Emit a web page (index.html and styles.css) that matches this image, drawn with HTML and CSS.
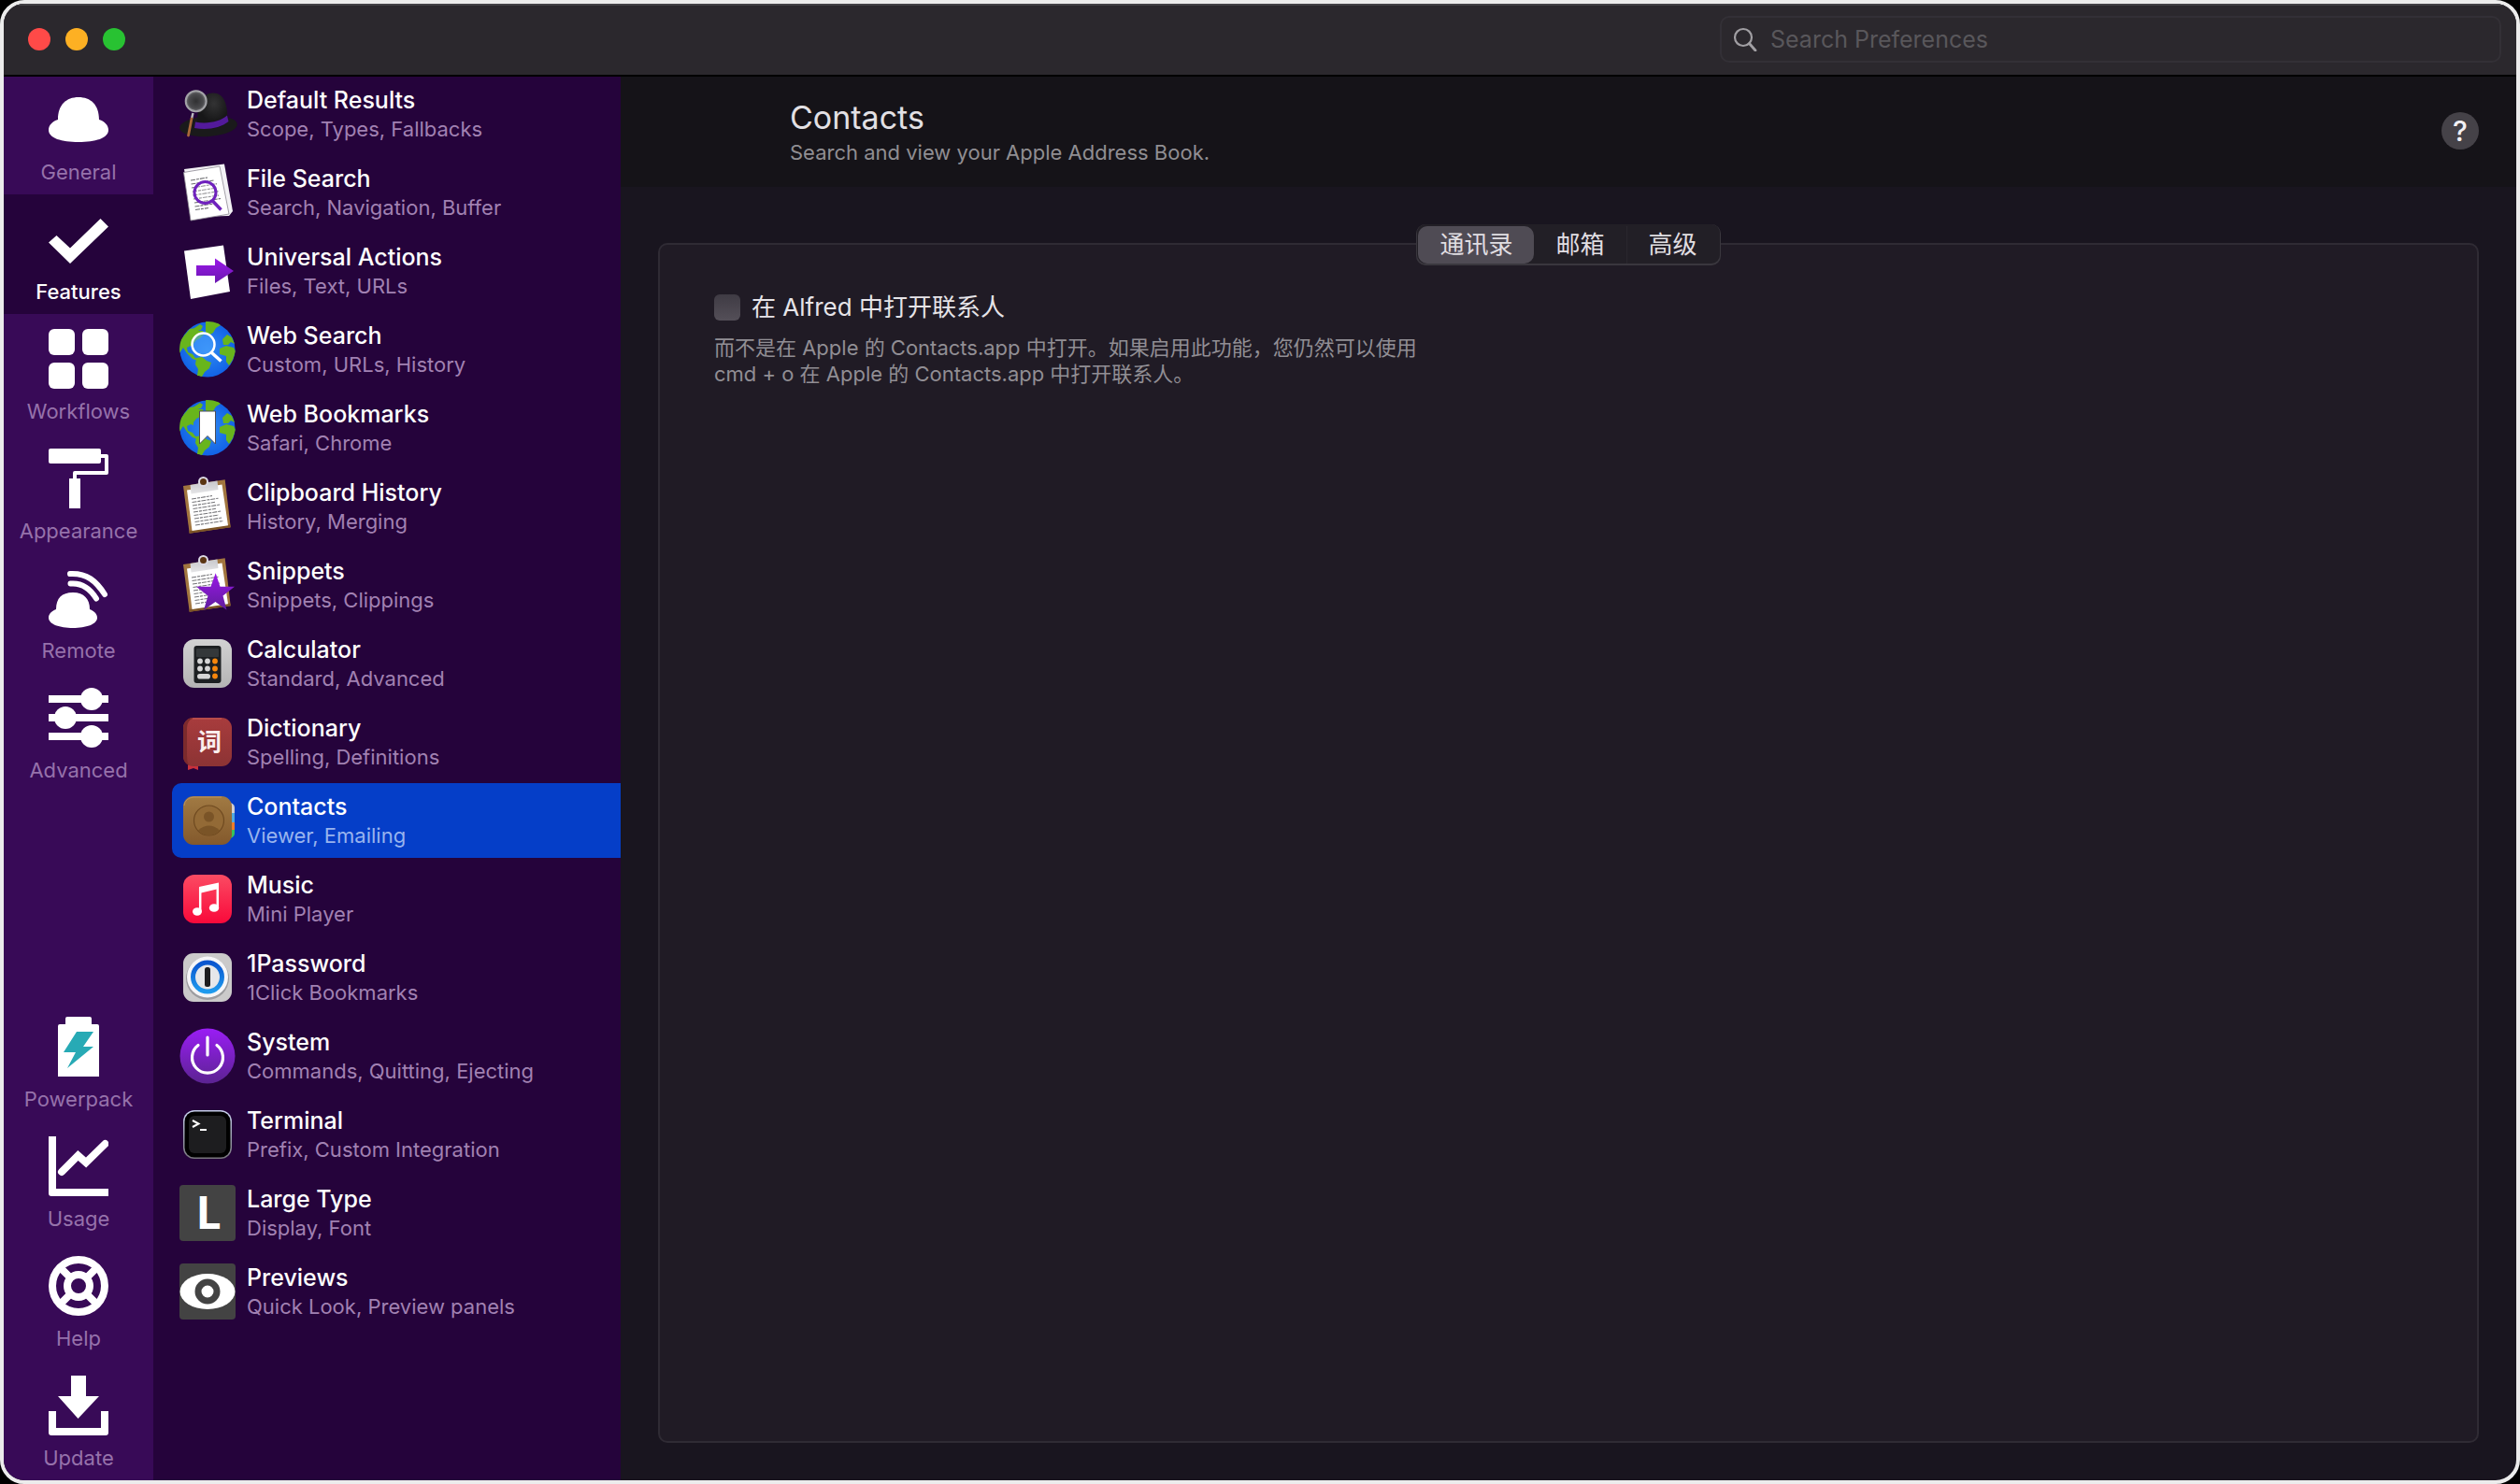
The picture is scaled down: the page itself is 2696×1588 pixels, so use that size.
FILE: index.html
```html
<!DOCTYPE html>
<html lang="en">
<head>
<meta charset="utf-8">
<title>Alfred Preferences</title>
<link rel="stylesheet" href="styles.css">
</head>
<body>
<svg class="defs" aria-hidden="true">
  <defs>
    <linearGradient id="purple" x1="0" y1="0" x2="0" y2="1"><stop offset="0" stop-color="#9a1df5"/><stop offset="1" stop-color="#5b2391"/></linearGradient>
    <linearGradient id="star" x1="0" y1="0" x2="0" y2="1"><stop offset="0" stop-color="#9a17e8"/><stop offset="1" stop-color="#5f1d9c"/></linearGradient>
    <linearGradient id="arrow" x1="0" y1="0" x2="0" y2="1"><stop offset="0" stop-color="#9a17e8"/><stop offset="1" stop-color="#6a18b0"/></linearGradient>
    <linearGradient id="grey" x1="0" y1="0" x2="0" y2="1"><stop offset="0" stop-color="#d2d2d2"/><stop offset="1" stop-color="#b4b4b4"/></linearGradient>
    <linearGradient id="clip" x1="0" y1="0" x2="0" y2="1"><stop offset="0" stop-color="#c4c4c8"/><stop offset="1" stop-color="#e6e6e8"/></linearGradient>
    <linearGradient id="pink" x1="0" y1="0" x2="0" y2="1"><stop offset="0" stop-color="#fb4b63"/><stop offset="1" stop-color="#f9093a"/></linearGradient>
    <linearGradient id="brown" x1="0" y1="0" x2="0" y2="1"><stop offset="0" stop-color="#a17a43"/><stop offset="1" stop-color="#83592c"/></linearGradient>
    <linearGradient id="red" x1="0" y1="0" x2="0" y2="1"><stop offset="0" stop-color="#a83c3d"/><stop offset="1" stop-color="#8c3334"/></linearGradient>
    <linearGradient id="steel" x1="0" y1="0" x2="0" y2="1"><stop offset="0" stop-color="#c6cfec"/><stop offset="1" stop-color="#77767c"/></linearGradient>
    <linearGradient id="ring" x1="0" y1="0" x2="0" y2="1"><stop offset="0" stop-color="#0a55cf"/><stop offset="1" stop-color="#1f9bee"/></linearGradient>
    <radialGradient id="sea"><stop offset="0" stop-color="#2f8bf2"/><stop offset="1" stop-color="#1263e6"/></radialGradient>
    <radialGradient id="lens"><stop offset="0" stop-color="#303032"/><stop offset=".7" stop-color="#4a4a4d"/><stop offset="1" stop-color="#77777b"/></radialGradient>
    <radialGradient id="felt" cx=".55" cy=".3"><stop offset="0" stop-color="#333334"/><stop offset="1" stop-color="#171718"/></radialGradient>
    <clipPath id="disc"><circle cx="30" cy="30" r="30"/></clipPath>
    <g id="globe">
      <circle cx="30" cy="30" r="29.500" fill="url(#sea)"/>
      <g clip-path="url(#disc)" fill="#68b51c">
        <path d="M5 15l6-7 6-1 4 3 4 0 1 4-4 4-4 2-3 4 0 3-3-1-4 2 1 5 5 2 3 4 4 1-1 2-6-2-6-6-4-6-4 6v-12z"/>
        <path d="M18 39l6-1 5 4 5 2-2 6-5 4-3 5-5-1 1-7-3-5z"/>
        <path d="M28 0h12l4 4-5 3-3 5-5 3-3-4z"/>
        <path d="M16 7l6-4 3 2-2 4-5 1z"/>
        <path d="M46 19l5-5 5 3 3 7-4-2-3 3-5 0z"/>
        <path d="M43 29l7-3 8 2 2 4-3 9-4 6-3-4 0-6-7-2z"/>
      </g>
    </g>
    <g id="board">
      <path d="M4 8L48.700 1.300 54.700 52.300 10.700 58.700z" fill="#a2763f"/>
      <path d="M54.700 52.300L10.700 58.700 10.200 56 54.300 49.500z" fill="#7d5526"/>
      <path d="M8 12.500L45.500 6.500 52 50.300 13.500 56z" fill="#fff"/>
      <path d="M13 22l22-3.500M13.500 25.500l28-4.300M14 29l24-3.700M14.500 32.500l29-4.500M15 36l24-3.700M15.500 39.500l29-4.500M16 43l26-4M16.500 46.500l29-4.500M17 50l30-4.600" stroke="#77777b" stroke-width="1.100" stroke-dasharray="5 1 3 1"/>
      <path d="M11.500 7L20 5.500C22 1 29 0 31 4l9.500-1.500L41.500 12 12.500 16.500z" fill="url(#clip)"/>
      <circle cx="25.500" cy="3.500" r="4.500" fill="#5a3412" stroke="#dcd9e4" stroke-width="2"/>
    </g>
  </defs>
</svg>

<div class="window">
  <header class="titlebar">
    <div class="lights">
      <button class="light light-close" aria-label="Close"></button>
      <button class="light light-min" aria-label="Minimise"></button>
      <button class="light light-zoom" aria-label="Zoom"></button>
    </div>
    <label class="search">
      <svg class="search-icon" viewBox="0 0 26 26" aria-hidden="true"><circle cx="11" cy="11" r="9" fill="none" stroke="#a19fa3" stroke-width="2.200"/><path d="M17.500 17.500L24 25" stroke="#a19fa3" stroke-width="2.800" stroke-linecap="round"/></svg>
      <input class="search-input" type="text" placeholder="Search Preferences" aria-label="Search Preferences">
    </label>
  </header>

  <div class="body">
    <nav class="nav">
      <a class="nav-item" href="#general">
        <svg class="nav-icon" viewBox="0 0 64 64"><path d="M10 32C10 16 19 8 32 8s22 8 22 24c6 2 10 6 10 11 0 9-14 13-32 13S0 52 0 43c0-5 4-9 10-11z"/></svg>
        General</a>
      <a class="nav-item nav-item-active" href="#features">
        <svg class="nav-icon" viewBox="0 0 64 64"><path d="M55.500 10L64 18.500 23 58 0 35.500 8.500 28 23 41.500z"/></svg>
        Features</a>
      <a class="nav-item" href="#workflows">
        <svg class="nav-icon" viewBox="0 0 64 64"><rect width="28" height="28" rx="6"/><rect x="36" width="28" height="28" rx="6"/><rect y="36" width="28" height="28" rx="6"/><rect x="36" y="36" width="28" height="28" rx="6"/></svg>
        Workflows</a>
      <a class="nav-item" href="#appearance">
        <svg class="nav-icon" viewBox="0 0 64 64"><rect width="56" height="16" rx="2"/><path d="M56 6h6q2 0 2 2v18q0 2-2 2H30v4h4v32H22V32h4v-6q0-2 2-2h32V10h-4z"/></svg>
        Appearance</a>
      <a class="nav-item" href="#remote">
        <svg class="nav-icon" viewBox="0 0 64 64"><path d="M8 44C8 32 14 26 26 26s18 7 18 18c5 2 8 5 8 9 0 7-12 11-26 11S0 60 0 53c0-4 3-7 8-9z"/><path d="M23 6C41 5 51 14 60 28M23.500 16.500C35 15.500 44 21 51 32.500" fill="none" stroke="#fff" stroke-width="6" stroke-linecap="round"/></svg>
        Remote</a>
      <a class="nav-item" href="#advanced">
        <svg class="nav-icon" viewBox="0 0 64 64"><path d="M0 8h64v8H0zM0 28h64v8H0zM0 48h64v8H0z"/><circle cx="46" cy="12" r="12"/><circle cx="18" cy="32" r="12"/><circle cx="46" cy="52" r="12"/></svg>
        Advanced</a>
      <a class="nav-item nav-item-bottom" href="#powerpack">
        <svg class="nav-icon" viewBox="0 0 64 64"><path d="M20 0h24q2 0 2 2v6h6q2 0 2 2v54H10V10q0-2 2-2h6V2q0-2 2-2z"/><path d="M30 16h18L37 32h11L20 55l9-17H16z" fill="#27aab5"/></svg>
        Powerpack</a>
      <a class="nav-item" href="#usage">
        <svg class="nav-icon" viewBox="0 0 64 64"><path d="M0 0h8v56h56v8H3q-3 0-3-3z"/><path d="M14 38L31.500 20.500 40 28 60.500 8" fill="none" stroke="#fff" stroke-width="8" stroke-linecap="round"/></svg>
        Usage</a>
      <a class="nav-item" href="#help">
        <svg class="nav-icon nav-icon-outline" viewBox="0 0 64 64"><circle cx="32" cy="32" r="28"/><circle cx="32" cy="32" r="12"/><path d="M13 13l10 10M51 13L41 23M13 51l10-10M51 51L41 41"/></svg>
        Help</a>
      <a class="nav-item" href="#update">
        <svg class="nav-icon" viewBox="0 0 64 64"><path d="M24 0h16v22h14L31.500 46 10 22h14zM0 38h8v18h48V38h8v23q0 3-3 3H3q-3 0-3-3z"/></svg>
        Update</a>
    </nav>

    <nav class="list">
      <a class="row" href="#default-results">
        <svg class="row-icon" viewBox="0 0 60 60"><ellipse cx="31" cy="43" rx="31" ry="11" fill="#1a1a1b" transform="rotate(-4 31 43)"/><path d="M19 40C19 20 24 7.500 36 7.500S51 20 51.500 34v5C42 48 26 46 19 44z" fill="url(#felt)"/><path d="M17 38.500C30 41 44 38 51 31.500l1.500 6.500C44 45 30 47.500 16 45z" fill="#531a9b"/><path d="M14.500 29L13 35" stroke="#b9b9bd" stroke-width="2.500"/><path d="M13 35L9.500 53" stroke="#a9683a" stroke-width="2.800" stroke-linecap="round"/><circle cx="17.700" cy="16.300" r="11" fill="url(#lens)" stroke="#a3a3a7" stroke-width="2"/></svg>
        <span class="row-text"><span class="row-title">Default Results</span><span class="row-sub">Scope, Types, Fallbacks</span></span></a>
      <a class="row" href="#file-search">
        <svg class="row-icon" viewBox="0 0 60 60"><path d="M5 5L48 -.500 57 50 53 55 14 56z" fill="#f3f2f5"/><path d="M4.500 8.500L43 2 53 53 12 60z" fill="#fff" stroke="#8d8993" stroke-width=".8"/><path d="M12 17l18-3M12.500 21l24-4M13 25l27-4.300M14 29l26-4M14.500 33l27-4.300M15 37l27-4M16 41l28-4.500M16.500 45l20-3M17 48.500l14-2" stroke="#6d6d71" stroke-width="1.100" stroke-dasharray="5 1 3 1"/><circle cx="27.500" cy="30" r="11.500" fill="#fff" fill-opacity=".3" stroke="#6f22bd" stroke-width="3"/><path d="M35.500 39l9 9.500" stroke="#6f22bd" stroke-width="3.500"/></svg>
        <span class="row-text"><span class="row-title">File Search</span><span class="row-sub">Search, Navigation, Buffer</span></span></a>
      <a class="row" href="#universal-actions">
        <svg class="row-icon" viewBox="0 0 60 60"><path d="M5 8.500L47 2.500 54 52 12 60z" fill="#fff"/><path d="M18 24h20v-7.500L58 30 38 43v-8H18z" fill="url(#arrow)"/></svg>
        <span class="row-text"><span class="row-title">Universal Actions</span><span class="row-sub">Files, Text, URLs</span></span></a>
      <a class="row" href="#web-search">
        <svg class="row-icon" viewBox="0 0 60 60"><use href="#globe"/><circle cx="25.500" cy="24.500" r="12" fill="#4aa0ff" fill-opacity=".55" stroke="#fff" stroke-width="2.500"/><path d="M34 33l10.500 9.500" stroke="#fff" stroke-width="3.500"/></svg>
        <span class="row-text"><span class="row-title">Web Search</span><span class="row-sub">Custom, URLs, History</span></span></a>
      <a class="row" href="#web-bookmarks">
        <svg class="row-icon" viewBox="0 0 60 60"><use href="#globe"/><path d="M21.500 12h17v35L30 38.500 21.500 47z" fill="#fff" stroke="#4d4d55" stroke-width="1"/></svg>
        <span class="row-text"><span class="row-title">Web Bookmarks</span><span class="row-sub">Safari, Chrome</span></span></a>
      <a class="row" href="#clipboard-history">
        <svg class="row-icon" viewBox="0 0 60 60"><use href="#board"/></svg>
        <span class="row-text"><span class="row-title">Clipboard History</span><span class="row-sub">History, Merging</span></span></a>
      <a class="row" href="#snippets">
        <svg class="row-icon" viewBox="0 0 60 60"><use href="#board"/><path d="M38.700 17.300L43.500 31.700 59 31.700 46.500 41.500 50.500 56.700 38.500 48 26 56.700 30.500 41.500 18 31.700 33.500 31.700z" fill="url(#star)"/></svg>
        <span class="row-text"><span class="row-title">Snippets</span><span class="row-sub">Snippets, Clippings</span></span></a>
      <a class="row" href="#calculator">
        <svg class="row-icon" viewBox="0 0 60 60"><rect x="4" y="4" width="52" height="52" rx="12" fill="url(#grey)"/><rect x="15.500" y="11" width="29" height="40" rx="3" fill="#1d2022"/><rect x="18" y="14" width="24" height="9" rx="1" fill="#34383a"/><g fill="#d6d6d6"><circle cx="22" cy="27.500" r="2.900"/><circle cx="30" cy="27.500" r="2.900"/><circle cx="22" cy="35.500" r="2.900"/><circle cx="30" cy="35.500" r="2.900"/><rect x="19" y="41" width="14" height="5.600" rx="2.800"/></g><g fill="#f5860c"><circle cx="38" cy="27.500" r="2.900"/><circle cx="38" cy="35.500" r="2.900"/><circle cx="38" cy="43.500" r="2.900"/></g></svg>
        <span class="row-text"><span class="row-title">Calculator</span><span class="row-sub">Standard, Advanced</span></span></a>
      <a class="row" href="#dictionary">
        <svg class="row-icon" viewBox="0 0 60 60"><path d="M9 52h11v8l-5-2-6 2z" fill="#c9303c"/><rect x="4" y="4" width="52" height="52" rx="11" fill="url(#red)"/><path d="M15 4a11 11 0 0 0-11 11v30a11 11 0 0 0 6 10q-2-4-2-10V15q0-8 7-11z" fill="#7b2a2c"/><path d="M14 5h31" stroke="#c95a58"/><text x="32" y="39" class="glyph-ci">词</text></svg>
        <span class="row-text"><span class="row-title">Dictionary</span><span class="row-sub">Spelling, Definitions</span></span></a>
      <a class="row row-active" href="#contacts">
        <svg class="row-icon" viewBox="0 0 60 60"><path d="M50 10q9 1 9 6v6h-9z" fill="#d2cfd0"/><path d="M50 22h9v10h-9z" fill="#4fa9e0"/><path d="M50 32h9v8h-9z" fill="#ee7d2b"/><path d="M50 40h9v4q0 5-9 6z" fill="#38c35a"/><rect x="4" y="4" width="52" height="52" rx="11" fill="url(#brown)"/><path d="M5 14Q6 6 15 5h30" stroke="#b89362" fill="none"/><circle cx="31.500" cy="30" r="16" fill="#936a36" stroke="#6f4a20" stroke-width="1.200"/><circle cx="31.500" cy="26" r="5.500" fill="#7a5427"/><path d="M20 40.500q11.500-10 23 0-11.500 11-23 0z" fill="#7a5427"/></svg>
        <span class="row-text"><span class="row-title">Contacts</span><span class="row-sub">Viewer, Emailing</span></span></a>
      <a class="row" href="#music">
        <svg class="row-icon" viewBox="0 0 60 60"><rect x="4" y="4" width="52" height="52" rx="12" fill="url(#pink)"/><path d="M22.200 18v25M40.800 14v25" stroke="#fff" stroke-width="2.500"/><path d="M21 17L42 12.500V19L21 24z" fill="#fff"/><ellipse cx="19" cy="43.500" rx="5" ry="4.200" fill="#fff"/><ellipse cx="37" cy="39.500" rx="5.200" ry="4.300" fill="#fff"/></svg>
        <span class="row-text"><span class="row-title">Music</span><span class="row-sub">Mini Player</span></span></a>
      <a class="row" href="#1password">
        <svg class="row-icon" viewBox="0 0 60 60"><rect x="4" y="4" width="52" height="52" rx="11" fill="#cbcaca"/><circle cx="30" cy="31" r="23" fill="#9c9c9f"/><circle cx="30" cy="29.500" r="22" fill="#f6f6f8"/><circle cx="30" cy="29.500" r="15.500" fill="#e6e7ea" stroke="url(#ring)" stroke-width="5"/><rect x="27" y="19" width="6" height="21" rx="2.500" fill="#1d1d20"/></svg>
        <span class="row-text"><span class="row-title">1Password</span><span class="row-sub">1Click Bookmarks</span></span></a>
      <a class="row" href="#system">
        <svg class="row-icon" viewBox="0 0 60 60"><circle cx="30" cy="30" r="29.500" fill="url(#purple)"/><path d="M30 10v19M20 18.500a16.500 16.500 0 1 0 20 0" fill="none" stroke="#fff" stroke-width="3.200" stroke-linecap="round"/></svg>
        <span class="row-text"><span class="row-title">System</span><span class="row-sub">Commands, Quitting, Ejecting</span></span></a>
      <a class="row" href="#terminal">
        <svg class="row-icon" viewBox="0 0 60 60"><rect x="4" y="4" width="52" height="52" rx="12" fill="url(#steel)"/><rect x="5.500" y="5.500" width="49" height="49" rx="10.500" fill="#000"/><rect x="10" y="10" width="40" height="40" rx="6" fill="#1d1d1f"/><path d="M14 15l6.500 3.500L14 22" fill="none" stroke="#fff" stroke-width="2"/><path d="M22 25h7" stroke="#fff" stroke-width="2"/></svg>
        <span class="row-text"><span class="row-title">Terminal</span><span class="row-sub">Prefix, Custom Integration</span></span></a>
      <a class="row" href="#large-type">
        <svg class="row-icon" viewBox="0 0 60 60"><rect width="60" height="60" rx="4" fill="#434343"/><text x="31" y="47" class="glyph-l">L</text></svg>
        <span class="row-text"><span class="row-title">Large Type</span><span class="row-sub">Display, Font</span></span></a>
      <a class="row" href="#previews">
        <svg class="row-icon" viewBox="0 0 60 60"><rect width="60" height="60" rx="4" fill="#434343"/><ellipse cx="30" cy="30" rx="29.500" ry="19" fill="#fff"/><circle cx="30" cy="30" r="10" fill="none" stroke="#434343" stroke-width="7"/></svg>
        <span class="row-text"><span class="row-title">Previews</span><span class="row-sub">Quick Look, Preview panels</span></span></a>
    </nav>

    <main class="main">
      <header class="head">
        <div class="head-text">
          <h1 class="head-title">Contacts</h1>
          <p class="head-sub">Search and view your Apple Address Book.</p>
        </div>
        <button class="help">?</button>
      </header>
      <section class="panel">
        <div class="tabs" role="tablist" lang="zh-CN">
          <button class="tab tab-active" role="tab" aria-selected="true">通讯录</button>
          <button class="tab" role="tab" aria-selected="false">邮箱</button>
          <button class="tab tab-divided" role="tab" aria-selected="false">高级</button>
        </div>
        <div class="options" lang="zh-CN">
          <label class="option"><input class="check" type="checkbox">在 Alfred 中打开联系人</label>
          <p class="hint">而不是在 Apple 的 Contacts.app 中打开。如果启用此功能，您仍然可以使用<br>cmd + o 在 Apple 的 Contacts.app 中打开联系人。</p>
        </div>
      </section>
    </main>
  </div>
</div>
</body>
</html>
```
FILE: styles.css
```css
* {
  box-sizing: border-box;
}

body {
  margin: 0;
  background: #000;
  font-family: Inter, "Noto Sans CJK SC", sans-serif;
  color: #fff;
}

button,
input {
  font: inherit;
  color: inherit;
  border: 0;
  padding: 0;
  margin: 0;
}

a {
  color: inherit;
  text-decoration: none;
}

.defs {
  position: absolute;
  width: 0;
  height: 0;
}

.window {
  min-height: 100vh;
  display: flex;
  flex-direction: column;
  border: 4px solid #ececec;
  border-radius: 26px;
  overflow: hidden;
  background: #19151f;
}

/* Title bar */
.titlebar {
  display: flex;
  align-items: center;
  justify-content: space-between;
  height: 78px;
  padding: 0 16px 0 26px;
  background: #2b282d;
  box-shadow: inset 0 2px #434145;
  border-bottom: 2px solid #000;
}

.lights {
  display: flex;
  gap: 16px;
}

.light {
  width: 24px;
  height: 24px;
  border-radius: 50%;
}

.light-close {
  background: #ff4a48;
}

.light-min {
  background: #fdb023;
}

.light-zoom {
  background: #28c232;
}

.search {
  display: flex;
  align-items: center;
  gap: 14px;
  width: 836px;
  height: 50px;
  padding: 0 12px;
  border: 2px solid #333036;
  border-radius: 10px;
}

.search-icon {
  width: 26px;
  height: 26px;
}

.search-input {
  flex: 1;
  background: none;
  font-size: 25px;
  line-height: 32px;
  outline: 0;
}

.search-input::placeholder {
  color: #59575b;
  opacity: 1;
}

.body {
  flex: 1;
  display: flex;
}

/* Section navigation */
.nav {
  width: 160px;
  display: flex;
  flex-direction: column;
  background: #380a57;
}

.nav-item {
  display: flex;
  flex-direction: column;
  align-items: center;
  gap: 8px;
  height: 128px;
  padding-top: 16px;
  font-size: 22px;
  line-height: 32px;
  color: #9672ab;
}

.nav-item:first-child {
  height: 126px;
  padding-top: 14px;
}

.nav-item-active {
  background: #25033b;
  color: #fff;
  font-weight: 500;
}

.nav-item-bottom {
  margin-top: auto;
}

.nav-icon {
  width: 64px;
  height: 64px;
  fill: #fff;
}

.nav-icon-outline {
  fill: none;
  stroke: #fff;
  stroke-width: 8px;
}

/* Feature list */
.list {
  width: 500px;
  display: flex;
  flex-direction: column;
  gap: 4px;
  padding-left: 20px;
  background: #25033b;
}

.row {
  display: flex;
  align-items: center;
  gap: 12px;
  height: 80px;
  padding-left: 8px;
  border-radius: 10px 0 0 10px;
}

.row-active {
  background: #053ec8;
}

.row-icon {
  width: 60px;
  height: 60px;
  overflow: visible;
}

.row-text {
  display: flex;
  flex-direction: column;
}

.row-title {
  font-size: 25px;
  line-height: 32px;
  font-weight: 500;
}

.row-sub {
  font-size: 22px;
  line-height: 30px;
  color: #a181b2;
}

.row-active .row-sub {
  color: #98b4ee;
}

.glyph-ci {
  font: 700 26px "Noto Sans CJK SC", sans-serif;
  fill: #fbeeee;
  text-anchor: middle;
}

.glyph-l {
  font: 700 48px "Open Sans", sans-serif;
  fill: #fff;
  text-anchor: middle;
}

/* Content */
.main {
  flex: 1;
  display: flex;
  flex-direction: column;
}

.head {
  display: flex;
  align-items: center;
  justify-content: space-between;
  height: 118px;
  padding: 0 40px 2px 181px;
  background: #151318;
}

.head-text {
  padding-top: 6px;
}

.head-title {
  margin: 0;
  font-size: 34px;
  line-height: 40px;
  font-weight: 400;
  color: #e2e0e4;
}

.head-sub {
  margin: 0;
  font-size: 22px;
  line-height: 34px;
  color: #908e92;
}

.help {
  width: 40px;
  height: 40px;
  border-radius: 50%;
  background: #454248;
  color: #f2f0f4;
  font-size: 30px;
  font-weight: 500;
  line-height: 40px;
}

.panel {
  flex: 1;
  display: flex;
  flex-direction: column;
  align-items: center;
  margin: 60px 40px 40px;
  border: 2px solid #2f2b34;
  border-radius: 10px;
  background: #201b25;
}

.tabs {
  display: flex;
  margin-top: -22px;
  height: 44px;
  padding: 2px;
  border-radius: 10px;
  background: #221f26;
  box-shadow: inset 0 -1px 0 1px #3a373e;
}

.tab {
  padding: 0 23px;
  background: none;
  font-size: 26px;
  line-height: 38px;
  color: #e0dee2;
}

.tab-active {
  background: #4f4b54;
  border-radius: 10px;
}

.tab-divided {
  border-left: 1px solid #2a272e;
}

.options {
  align-self: stretch;
  padding: 26px 58px;
}

.option {
  display: flex;
  align-items: center;
  gap: 12px;
  font-size: 26px;
  line-height: 38px;
  color: #e6e4e8;
}

.check {
  appearance: none;
  width: 28px;
  height: 28px;
  border-radius: 6px;
  background: linear-gradient(#3f3b44, #544f58);
}

.hint {
  margin: 10px 0 0;
  font-size: 22px;
  line-height: 28px;
  color: #918e94;
}
```
